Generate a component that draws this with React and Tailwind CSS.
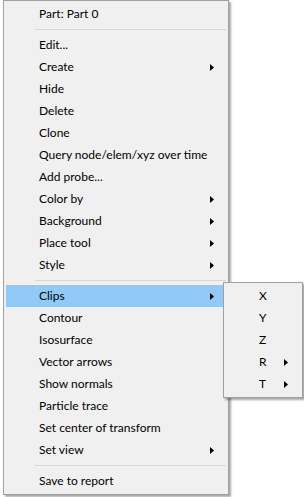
import React from "react";

const font = { fontFamily: '"Segoe UI", Lato, "Noto Sans", sans-serif' };

function Arrow() {
  return (
    <svg width="4" height="7" viewBox="0 0 4 7" className="block">
      <path d="M0 0 L4 3.5 L0 7 Z" fill="#000" />
    </svg>
  );
}

function Item({ label, sub, active }) {
  return (
    <div
      className={
        "flex h-[22px] items-center mx-[2px] pl-[33px] pr-[12px] whitespace-nowrap " +
        (active ? "bg-[#91c9f7]" : "")
      }
    >
      <span className="flex-1 leading-none">{label}</span>
      {sub && <Arrow />}
    </div>
  );
}

function Sep() {
  return (
    <div className="flex h-[9px] items-center pl-[31px] pr-[2px]">
      <div className="h-px w-full bg-[#d7d7d7]" />
    </div>
  );
}

export default function App() {
  const groupA = [
    ["Edit...", false],
    ["Create", true],
    ["Hide", false],
    ["Delete", false],
    ["Clone", false],
    ["Query node/elem/xyz over time", false],
    ["Add probe...", false],
    ["Color by", true],
    ["Background", true],
    ["Place tool", true],
    ["Style", true],
  ];
  const groupB = [
    ["Contour", false],
    ["Isosurface", false],
    ["Vector arrows", false],
    ["Show normals", false],
    ["Particle trace", false],
    ["Set center of transform", false],
    ["Set view", true],
  ];
  const clips = [
    ["X", false],
    ["Y", false],
    ["Z", false],
    ["R", true],
    ["T", true],
  ];

  return (
    <div className="relative h-[497px] w-[304px] overflow-hidden bg-white text-[12px] text-black" style={font}>
      <div className="ml-[3px] w-[226px] border border-[#a0a0a0] bg-[#f0f0f0] py-[2px] shadow-[2px_2px_2px_rgba(0,0,0,0.35)]">
        <Item label="Part: Part 0" />
        <Sep />
        {groupA.map(([l, s]) => (
          <Item key={l} label={l} sub={s} />
        ))}
        <Sep />
        <Item label="Clips" sub active />
        {groupB.map(([l, s]) => (
          <Item key={l} label={l} sub={s} />
        ))}
        <Sep />
        <Item label="Save to report" />
      </div>

      {/* Clips submenu */}
      <div className="absolute left-[223px] top-[282px] w-[80px] border border-[#a0a0a0] bg-[#f0f0f0] py-[2px] shadow-[2px_2px_2px_rgba(0,0,0,0.35)]">
        {clips.map(([l, s]) => (
          <Item key={l} label={l} sub={s} />
        ))}
      </div>
    </div>
  );
}
